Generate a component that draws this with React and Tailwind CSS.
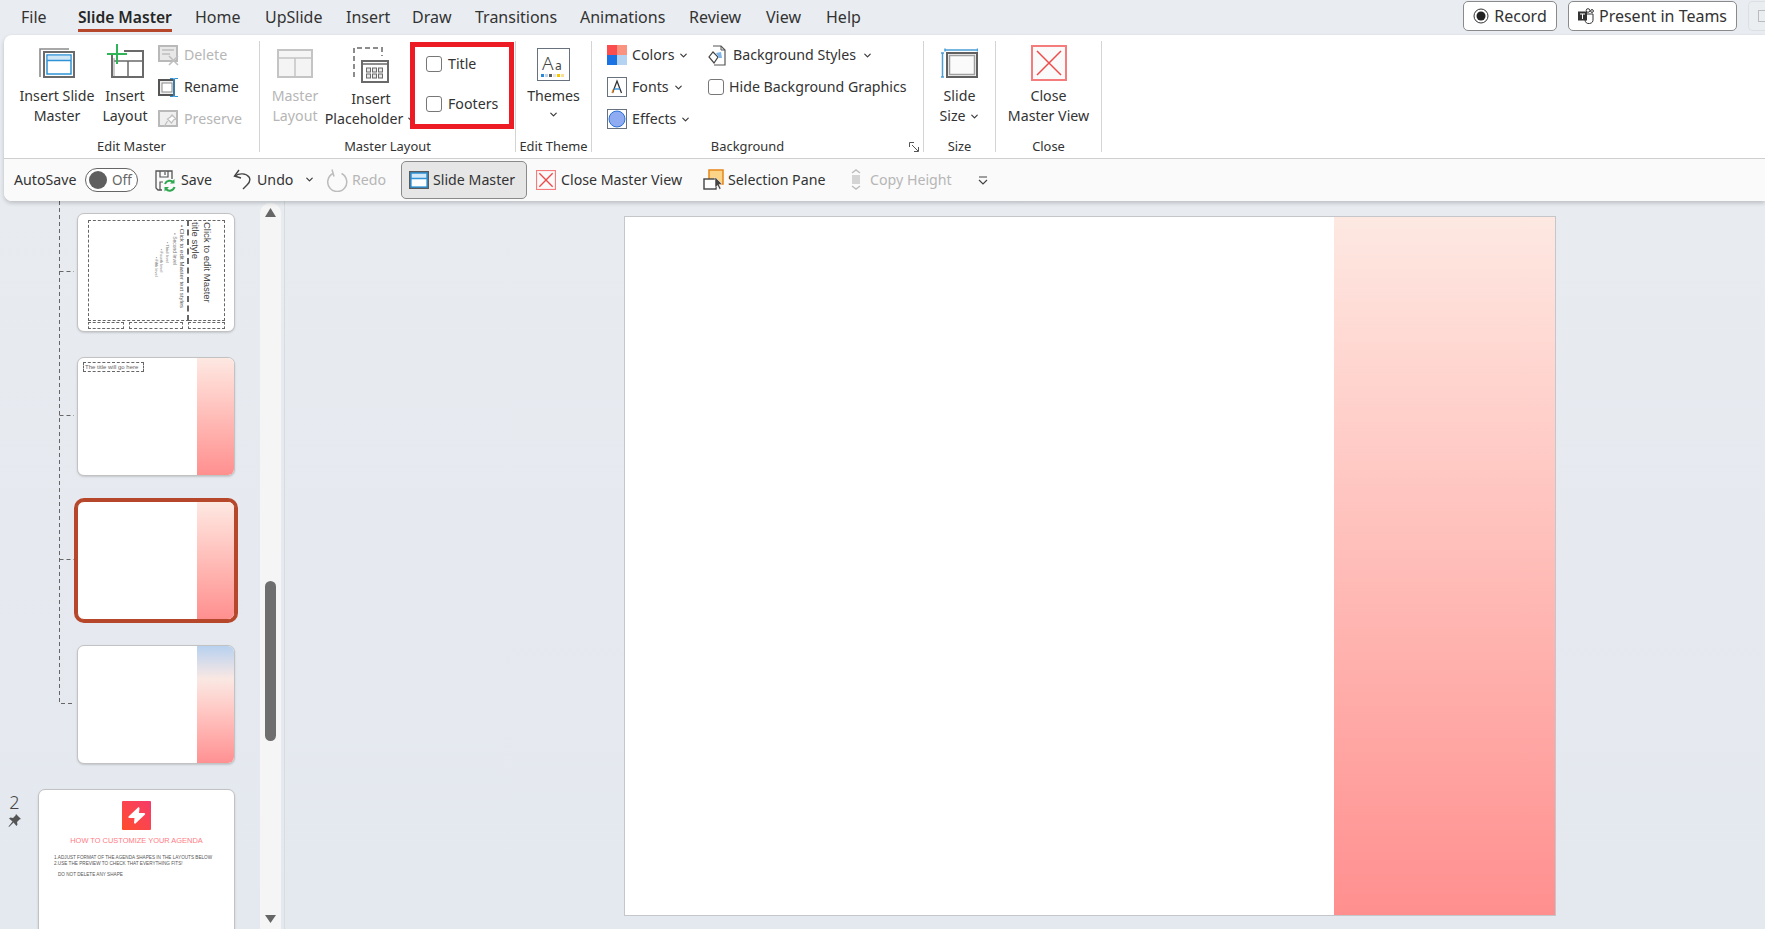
import React from 'react';
import { ChevronDown } from 'lucide-react';

const tabs = [
  { name: 'File', w: 'w-[57px]' },
  { name: 'Slide Master', w: 'w-[117px]', active: true },
  { name: 'Home', w: 'w-[70px]' },
  { name: 'UpSlide', w: 'w-[81px]' },
  { name: 'Insert', w: 'w-[66px]' },
  { name: 'Draw', w: 'w-[63px]' },
  { name: 'Transitions', w: 'w-[105px]' },
  { name: 'Animations', w: 'w-[109px]' },
  { name: 'Review', w: 'w-[77px]' },
  { name: 'View', w: 'w-[60px]' },
  { name: 'Help', w: 'w-[60px]' },
];

const Chev = ({ className = '' }) => <ChevronDown size={11} strokeWidth={2.6} className={`shrink-0 text-[#3a3a3a] ${className}`} />;

const InsertMasterIcon = () => (
  <svg width="36" height="30" viewBox="0 0 36 30" fill="none">
    <path d="M1 29V1h29" stroke="#8c8c8c" strokeWidth="1.6" />
    <rect x="5" y="4" width="30" height="25" fill="#fff" stroke="#6a6a6a" strokeWidth="2" />
    <rect x="8" y="7" width="24" height="19" fill="#fff" stroke="#2f93d6" strokeWidth="1.5" />
    <rect x="8.8" y="7.8" width="22.4" height="4.2" fill="#cfe6f6" />
    <path d="M8 12.5h24" stroke="#2f93d6" strokeWidth="1.5" />
  </svg>
);

const InsertLayoutIcon = () => (
  <svg width="37" height="34" viewBox="0 0 37 34" fill="none" className="-mt-[4px]">
    <path d="M5 11v22h31V7H17" stroke="#6a6a6a" strokeWidth="2" />
    <path d="M7 17h28M21 17v15" stroke="#6a6a6a" strokeWidth="1.5" />
    <path d="M7 32V14" stroke="#9a9a9a" strokeWidth="1" />
    <path d="M0 10h20M10 0v20" stroke="#2fb457" strokeWidth="2" />
  </svg>
);

const DeleteIcon = () => (
  <svg width="21" height="21" viewBox="0 0 21 21" fill="none">
    <rect x="1" y="1" width="18" height="15" fill="#e8e8e8" stroke="#b9b9b9" strokeWidth="2" />
    <path d="M4 5h12M4 9h8" stroke="#bdbdbd" strokeWidth="1.6" />
    <path d="M11 11l9 9M20 11l-9 9" stroke="#bfbfbf" strokeWidth="1.6" />
  </svg>
);

const RenameIcon = () => (
  <svg width="21" height="21" viewBox="0 0 21 21" fill="none">
    <rect x="1" y="3" width="15" height="15" fill="#eee" stroke="#555" strokeWidth="2" />
    <rect x="4" y="6" width="10" height="9" fill="#fff" stroke="#8a8a8a" strokeWidth="1" />
    <path d="M12 1.5h2.5c1 0 1.5.5 1.5 1.500v15c0 1-.5 1.500-1.500 1.500H12M20 1.500h-2.500c-1 0-1.500.5-1.500 1.500v15c0 1 .5 1.500 1.500 1.500H20" stroke="#2f93d6" strokeWidth="1.2" />
  </svg>
);

const PreserveIcon = () => (
  <svg width="21" height="21" viewBox="0 0 21 21" fill="none">
    <rect x="1" y="2" width="18" height="15" fill="#efefef" stroke="#b9b9b9" strokeWidth="2" />
    <path d="M14 6l4 4-2.500 1-2 3-4-4 3-2zM9.500 12L6 18" stroke="#c0c0c0" strokeWidth="1.3" fill="#fff" />
  </svg>
);

const MasterLayoutIcon = () => (
  <svg width="36" height="29" viewBox="0 0 36 29" fill="none">
    <rect x="1" y="1" width="34" height="27" fill="#f4f4f4" stroke="#c4c4c4" strokeWidth="2" />
    <path d="M2 9h32M18 9v18" stroke="#c4c4c4" strokeWidth="1.5" />
  </svg>
);

const PlaceholderIcon = () => (
  <svg width="36" height="36" viewBox="0 0 36 36" fill="none">
    <path d="M1 30V1h28v8" stroke="#8c8c8c" strokeWidth="2" strokeDasharray="5 3" />
    <rect x="9" y="14" width="26" height="21" fill="#fff" stroke="#6a6a6a" strokeWidth="2" />
    <path d="M10 17h24" stroke="#6a6a6a" strokeWidth="1.5" />
    {[13.5, 19.5, 25.5].map(x => [21, 27].map(y => (
      <rect key={`${x}-${y}`} x={x} y={y} width="4" height="4" fill="#e8e8e8" stroke="#6a6a6a" strokeWidth="1" />
    )))}
  </svg>
);

const ThemesIcon = () => (
  <svg width="33" height="33" viewBox="0 0 33 33" fill="none">
    <rect x="0.5" y="0.5" width="32" height="32" fill="#fff" stroke="#68727f" strokeWidth="1" />
    <text x="5" y="22" fontSize="19" fontFamily="'Noto Sans', sans-serif" fontWeight="300" fill="#444">A</text>
    <text x="18" y="22" fontSize="12" fontFamily="'Noto Sans', sans-serif" fill="#444">a</text>
    <rect x="4" y="26" width="3" height="3" fill="#2b88d8" />
    <rect x="8" y="26" width="3" height="3" fill="#b8d4ee" />
    <rect x="12" y="26" width="3" height="3" fill="#5a5a5a" />
    <rect x="16" y="26" width="3" height="3" fill="#e4e4e4" />
    <rect x="20" y="26" width="3" height="3" fill="#f6c700" />
    <rect x="24" y="26" width="3" height="3" fill="#fbdf8f" />
  </svg>
);

const ColorsIcon = () => (
  <svg width="20" height="20" viewBox="0 0 20 20">
    <rect width="10" height="10" fill="#fb4d4d" />
    <rect x="10" width="10" height="10" fill="#f99380" />
    <rect y="10" width="10" height="10" fill="#1a73e0" />
    <rect x="10" y="10" width="10" height="10" fill="#b4d3f2" />
  </svg>
);

const FontsIcon = () => (
  <svg width="20" height="20" viewBox="0 0 20 20" fill="none">
    <rect x="0.5" y="0.5" width="19" height="19" fill="#fff" stroke="#68727f" />
    <path d="M5.5 16L10 4l4.500 12" stroke="#333" strokeWidth="1.3" />
    <path d="M7 12h6" stroke="#2b88d8" strokeWidth="1.3" />
    <path d="M5 16l1.300-3.500" stroke="#e98a15" strokeWidth="1.3" />
  </svg>
);

const EffectsIcon = () => (
  <svg width="20" height="20" viewBox="0 0 20 20" fill="none">
    <rect x="0.5" y="0.5" width="19" height="19" fill="#fff" stroke="#68727f" />
    <circle cx="10" cy="10" r="8" fill="#8fabf2" stroke="#2b72d8" strokeWidth="1" />
  </svg>
);

const BgStylesIcon = () => (
  <svg width="18" height="21" viewBox="0 0 18 21" fill="none">
    <path d="M5 1h8l4 4v15H6" stroke="#555" strokeWidth="1.2" />
    <path d="M13 1v4h4" stroke="#555" strokeWidth="1" />
    <path d="M5 7l5 5-4 6-5-6z" fill="#fff" stroke="#444" strokeWidth="1.2" />
    <path d="M8 8l5-1 1 6-3 0z" fill="#7fb4e8" />
  </svg>
);

const SlideSizeIcon = () => (
  <svg width="37" height="30" viewBox="0 0 37 30" fill="none">
    <path d="M4 2h33M4 .5v3M36.500 .5v3" stroke="#4a9fd8" strokeWidth="1.5" />
    <path d="M1.5 5v24M0 5h3M0 29h3" stroke="#4a9fd8" strokeWidth="1.5" />
    <rect x="6" y="5" width="30" height="24" fill="#f7f7f7" stroke="#606060" strokeWidth="2" />
    <rect x="8.5" y="7.5" width="25" height="19" fill="#fafafa" stroke="#a0a0a0" strokeWidth="1.5" />
  </svg>
);

const CloseIcon = ({ size }) => (
  <svg width={size} height={size} viewBox="0 0 36 36" fill="none">
    <rect x="1" y="1" width="34" height="34" fill="#fafafa" stroke="#f47c7c" strokeWidth="2" />
    <path d="M6 6l24 24M30 6L6 30" stroke="#ee4a4a" strokeWidth={size > 30 ? 1.5 : 2.4} />
  </svg>
);

const SaveIcon = () => (
  <svg width="21" height="23" viewBox="0 0 21 23" fill="none">
    <path d="M7 21H3l-2-2V2h16v8" stroke="#555" strokeWidth="1.3" />
    <path d="M5 2v6h8V2M10 3v3" stroke="#555" strokeWidth="1.2" />
    <path d="M5 21v-8h3" stroke="#555" strokeWidth="1.2" />
    <path d="M10 15a5 5 0 0 1 8.500-1.500M19.500 18a5 5 0 0 1-8.500 2" stroke="#2fa84f" strokeWidth="2" />
    <path d="M19.500 10v4.500H15M9.500 22.500V18H14" fill="#2fa84f" />
  </svg>
);

const UndoIcon = () => (
  <svg width="19" height="21" viewBox="0 0 19 21" fill="none">
    <path d="M6 1L1.500 7l6.500 2" stroke="#444" strokeWidth="1.4" />
    <path d="M2 7c4-3 11-3 14 1 2 3 0 6-2 8l-4 4" stroke="#444" strokeWidth="1.4" />
  </svg>
);

const RedoIcon = () => (
  <svg width="21" height="23" viewBox="0 0 21 23" fill="none">
    <path d="M6 4.500a9.500 9.500 0 1 0 8.500 0" stroke="#bcbcbc" strokeWidth="1.5" />
    <path d="M5 .5l2 7" stroke="#bcbcbc" strokeWidth="1.5" />
  </svg>
);

const SlideMasterSmallIcon = () => (
  <svg width="22" height="20" viewBox="0 0 22 20" fill="none">
    <rect x="1" y="1" width="20" height="18" fill="#5a5a5a" />
    <rect x="3" y="3" width="16" height="14" fill="#d4e9f8" stroke="#2f93d6" strokeWidth="1.5" />
    <rect x="3.8" y="8.5" width="14.4" height="7.7" fill="#fff" />
    <path d="M3 8.5h16" stroke="#2f93d6" strokeWidth="1.5" />
  </svg>
);

const SelectionPaneIcon = () => (
  <svg width="21" height="22" viewBox="0 0 21 22" fill="none">
    <rect x="6" y="1" width="14" height="14" fill="#fbd488" stroke="#e6861a" strokeWidth="1.5" />
    <rect x="1" y="10" width="12" height="10" fill="#fff" stroke="#444" strokeWidth="1.4" />
    <path d="M12 8l7 7-3 .5 2 4-1.500 1-2-4-2.500 2z" fill="#444" stroke="#fff" strokeWidth=".5" />
  </svg>
);

const CopyHeightIcon = () => (
  <svg width="14" height="21" viewBox="0 0 14 21" fill="none">
    <path d="M3 4l4-3 4 3M3 17l4 3 4-3" stroke="#bdbdbd" strokeWidth="1.5" />
    <rect x="3" y="6" width="8" height="9" fill="#d4d4d4" />
  </svg>
);

const Pin = () => (
  <svg width="13" height="13" viewBox="0 0 13 13" fill="#555">
    <path d="M8 0l5 5-1.500.5L9 8l.5 2.500L8.500 12 5.500 8.500 1 13 .5 12.500 4.500 7.500 1 4.500l1.500-1L5 4l2.500-2.500z" />
  </svg>
);

const LargeBtn = ({ icon, lines, w, top = 'h-[45px]', off, chev }) => (
  <div className={`${w} shrink-0 flex flex-col items-center text-center leading-[20px] ${off ? 'text-[#b6b6b6]' : 'text-[#333]'}`}>
    <div className={`${top} flex items-center justify-center pb-[1px]`}>{icon}</div>
    {lines.map((l, i) => (
      <div key={l} className="whitespace-nowrap flex items-center gap-[3px]">
        {l}
        {chev && i === lines.length - 1 && <Chev />}
      </div>
    ))}
  </div>
);

const SmallItem = ({ icon, label, off, chev, gap = 'gap-[5px]' }) => (
  <div className={`h-[28px] flex items-center ${gap} whitespace-nowrap ${off ? 'text-[#b6b6b6]' : 'text-[#333]'}`}>
    {icon}
    <span>{label}</span>
    {chev && <Chev className="ml-[-1px]" />}
  </div>
);

const Group = ({ w, label, children, labelClass = '', launcher }) => (
  <div className={`${w} shrink-0 h-[111px] mt-[6px] flex flex-col relative border-r border-[#d4d4d4]`}>
    <div className="flex-1 flex min-h-0">{children}</div>
    <div className={`h-[20px] mb-[-5px] flex items-center justify-center text-[12.9px] text-[#333] ${labelClass}`}>{label}</div>
    {launcher && (
      <svg width="10" height="10" viewBox="0 0 10 10" fill="none" className="absolute right-[4px] bottom-[0px]">
        <path d="M.5 5V.5H5M3 3l6 6M9.500 5v4.500H5" stroke="#555" strokeWidth="1" />
      </svg>
    )}
  </div>
);

const CheckBox = () => <div className="w-[16px] h-[16px] shrink-0 rounded-[3px] border border-[#777] bg-white" />;

const Thumb = ({ selected, className = 'ml-[77px] w-[158px] h-[119px]', children }) => (
  <div className={`${className} shrink-0 bg-white rounded-[7px] overflow-hidden flex border font-['Liberation_Sans',sans-serif] ${selected ? 'border-[#b7472a] ring-[3px] ring-[#b7472a]' : 'border-[#c2c2c2] shadow-[0_1px_2px_rgba(0,0,0,0.15)]'}`}>
    {children}
  </div>
);

const RedBand = () => <div className="w-[37px] shrink-0 h-full bg-linear-to-b from-[#fde8e2] to-[#ff8f8f]" />;

const App = () => (
  <div className="w-[1765px] h-[929px] overflow-hidden flex flex-col bg-linear-to-b from-[#e9edf1] to-[#e4e8ef] text-[14.2px] text-[#333] font-['Noto_Sans',sans-serif]">
    {/* Tabs */}
    <div className="h-[35px] shrink-0 flex items-start pt-[7px] pl-[21px] text-[#333] leading-[20px] text-[16px]">
      {tabs.map(t => (
        <div key={t.name} className={`${t.w} shrink-0`}>
          {t.active
            ? <span className="inline-block text-[15.6px] font-semibold text-[#262626] pb-[2px] border-b-[3px] border-[#b7472a]">{t.name}</span>
            : t.name}
        </div>
      ))}
      <div className="ml-auto flex gap-[11px] items-start -mt-[6px]">
        <div className="w-[94px] h-[30px] bg-white border border-[#8a8a8a] rounded-[5px] flex items-center justify-center gap-[5px]">
          <svg width="16" height="16" viewBox="0 0 16 16" fill="none">
            <circle cx="8" cy="8" r="7" stroke="#333" strokeWidth="1" />
            <circle cx="8" cy="8" r="4.5" fill="#222" />
          </svg>
          Record
        </div>
        <div className="w-[169px] h-[30px] bg-white border border-[#8a8a8a] rounded-[5px] flex items-center justify-center gap-[5px]">
          <svg width="16" height="16" viewBox="0 0 16 16">
            <circle cx="10" cy="2.5" r="1.8" fill="none" stroke="#333" strokeWidth="1" />
            <circle cx="14" cy="3" r="1.4" fill="none" stroke="#333" strokeWidth="1" />
            <path d="M6 6h9v5a4 4 0 0 1-8 1z" fill="none" stroke="#333" strokeWidth="1" />
            <rect x="0" y="3.5" width="9" height="9" fill="#333" />
            <path d="M2 5.5h5v1H5v4.500H4V6.500H2z" fill="#fff" />
          </svg>
          Present in Teams
        </div>
        <div className="w-[17px] h-[30px] bg-[#ebeef1] border border-r-0 border-[#dcdfe3] rounded-l-[5px] pl-[9px] pt-[8px]">
          <div className="w-[8px] h-[12px] border border-r-0 border-[#bbb]" />
        </div>
      </div>
    </div>

    {/* Ribbon + quick access */}
    <div className="ml-[4px] shrink-0 relative z-10 bg-white rounded-tl-[8px] rounded-bl-[8px] shadow-[0_2px_4px_rgba(0,0,0,0.2)]">
      <div className="h-[123px] flex items-start">
        <Group w="w-[256px]" label="Edit Master">
          <div className="pl-[11px] flex">
            <LargeBtn w="w-[84px]" icon={<InsertMasterIcon />} lines={['Insert Slide', 'Master']} />
            <LargeBtn w="w-[52px]" icon={<InsertLayoutIcon />} lines={['Insert', 'Layout']} />
          </div>
          <div className="ml-[7px] flex flex-col gap-[4px]">
            <SmallItem off icon={<DeleteIcon />} label="Delete" />
            <SmallItem icon={<RenameIcon />} label="Rename" />
            <SmallItem off icon={<PreserveIcon />} label="Preserve" />
          </div>
        </Group>

        <Group w="w-[256px]" label="Master Layout">
          <div className="pl-[10px]">
            <LargeBtn off w="w-[50px]" icon={<MasterLayoutIcon />} lines={['Master', 'Layout']} />
          </div>
          <div className="ml-[5px] mr-[-7px]">
            <LargeBtn w="w-[92px]" top="h-[48px]" chev icon={<PlaceholderIcon />} lines={['Insert', 'Placeholder']} />
          </div>
          <div className="mt-[1px] w-[104px] h-[87px] relative z-10 bg-white border-[5px] border-[#ed1c24] pl-[11px] flex flex-col gap-[6px]">
            <div className="h-[34px] flex items-center gap-[6px]"><CheckBox />Title</div>
            <div className="h-[34px] flex items-center gap-[6px]"><CheckBox />Footers</div>
          </div>
        </Group>

        <Group w="w-[76px]" label="Edit Theme">
          <div className="w-full flex flex-col items-center">
            <div className="h-[45px] flex items-center pt-[1px]"><ThemesIcon /></div>
            <div className="leading-[20px]">Themes</div>
            <Chev className="mt-[3px]" />
          </div>
        </Group>

        <Group w="w-[332px]" label="Background" labelClass="pr-[20px]" launcher>
          <div className="pl-[15px] w-[116px] flex flex-col gap-[4px]">
            <SmallItem icon={<ColorsIcon />} label="Colors" chev />
            <SmallItem icon={<FontsIcon />} label="Fonts" chev />
            <SmallItem icon={<EffectsIcon />} label="Effects" chev />
          </div>
          <div className="flex flex-col gap-[4px]">
            <SmallItem icon={<BgStylesIcon />} label="Background Styles" chev gap="gap-[7px]" />
            <SmallItem icon={<CheckBox />} label="Hide Background Graphics" />
          </div>
        </Group>

        <Group w="w-[72px]" label="Size">
          <LargeBtn w="w-full" chev icon={<SlideSizeIcon />} lines={['Slide', 'Size']} />
        </Group>

        <Group w="w-[106px]" label="Close">
          <LargeBtn w="w-full" icon={<CloseIcon size={36} />} lines={['Close', 'Master View']} />
        </Group>
      </div>

      <div className="h-[43px] border-t border-[#cfcfcf] bg-[#fafafa] rounded-bl-[8px] flex items-center pl-[10px] whitespace-nowrap">
        <div className="w-[71px] shrink-0">AutoSave</div>
        <div className="w-[53px] h-[24px] shrink-0 mr-[17px] rounded-full border border-[#666] bg-white flex items-center pl-[3px] gap-[5px] text-[13.5px] text-[#666]">
          <div className="w-[18px] h-[18px] rounded-full bg-[#5f5f5f]" />
          Off
        </div>
        <div className="w-[78px] shrink-0 flex items-center gap-[5px]"><SaveIcon />Save</div>
        <div className="w-[94px] shrink-0 flex items-center gap-[5px]"><UndoIcon />Undo<Chev className="ml-[6px]" /></div>
        <div className="w-[74px] shrink-0 flex items-center gap-[4px] text-[#b6b6b6]"><RedoIcon />Redo</div>
        <div className="w-[126px] h-[38px] shrink-0 mr-[9px] rounded-[5px] border border-[#8a8a8a] bg-[#e6e6e6] flex items-center pl-[6px] gap-[3px]"><SlideMasterSmallIcon />Slide Master</div>
        <div className="w-[167px] shrink-0 flex items-center gap-[5px]"><CloseIcon size={20} />Close Master View</div>
        <div className="w-[146px] shrink-0 flex items-center gap-[4px]"><SelectionPaneIcon />Selection Pane</div>
        <div className="w-[129px] shrink-0 flex items-center gap-[7px] text-[#b6b6b6]"><CopyHeightIcon />Copy Height</div>
        <svg width="10" height="9" viewBox="0 0 10 9" fill="none">
          <path d="M1 1h8M1 4l4 4 4-4" stroke="#444" strokeWidth="1.2" />
        </svg>
      </div>
    </div>

    {/* Main */}
    <div className="flex-1 min-h-0 flex">
      <div className="w-[285px] shrink-0 flex pr-[3px] border-r border-[#d8dce0] relative">
        {/* tree connector */}
        <svg width="80" height="505" viewBox="0 0 80 505" fill="none" className="absolute left-0 top-0">
          <path d="M59.5 0V502.5H74M59.5 70.5H74M59.5 214.5H74M59.5 358.5H74" stroke="#666" strokeWidth="1" strokeDasharray="4 3" />
        </svg>
        <div className="w-[260px] shrink-0 flex flex-col gap-[25px] pt-[12px] overflow-hidden">
          <Thumb>
            <div className="flex-1 flex flex-col pl-[10px] pr-[9px] pt-[6px] gap-[1px]">
              <div className="h-[101px] flex">
                <div className="w-[101px] border border-dashed border-[#666] border-r-2 flex flex-row-reverse overflow-hidden pt-[1px]">
                  <div className="[writing-mode:vertical-rl] text-[6px] leading-[7px] pr-[2px] pt-[3px] text-[#555] whitespace-nowrap">• Click to edit Master text styles</div>
                  <div className="[writing-mode:vertical-rl] text-[5px] leading-[7px] pt-[11px] text-[#777] whitespace-nowrap">• Second level</div>
                  <div className="[writing-mode:vertical-rl] text-[4px] leading-[7px] pt-[20px] text-[#777] whitespace-nowrap">• Third level</div>
                  <div className="[writing-mode:vertical-rl] text-[4px] leading-[5px] pt-[27px] text-[#777] whitespace-nowrap">• Fourth level</div>
                  <div className="[writing-mode:vertical-rl] text-[4px] leading-[5px] pt-[35px] text-[#777] whitespace-nowrap">• Fifth level</div>
                </div>
                <div className="flex-1 border border-l-0 border-dashed border-[#666] overflow-hidden pt-[1px]">
                  <div className="[writing-mode:vertical-rl] text-[9.5px] leading-[12px] text-[#444]">Click to edit Master title style</div>
                </div>
              </div>
              <div className="h-[7px] flex gap-[5px]">
                <div className="w-[36px] border border-dashed border-[#666]" />
                <div className="w-[54px] border border-dashed border-[#666]" />
                <div className="flex-1 border border-dashed border-[#666]" />
              </div>
            </div>
          </Thumb>

          <Thumb>
            <div className="flex-1 pt-[4px] pl-[5px]">
              <div className="w-[61px] h-[10px] border border-dashed border-[#666] text-[6px] leading-[8px] pl-[1px] text-[#666] whitespace-nowrap">The title will go here</div>
            </div>
            <RedBand />
          </Thumb>

          <Thumb selected>
            <div className="flex-1" />
            <RedBand />
          </Thumb>

          <Thumb>
            <div className="flex-1" />
            <div className="w-[37px] shrink-0 h-full bg-linear-to-b from-[#b7d1ef] via-[#fae8e3] via-[28%] to-[#ff9092]" />
          </Thumb>

          <div className="flex items-start shrink-0 relative">
            <div className="w-[38px] shrink-0 flex flex-col items-center pl-[1px] pt-[1px] pr-[10px] text-[#444]">
              <div className="text-[18px] leading-[24px] font-light">2</div>
              <Pin />
            </div>
            <Thumb className="w-[197px] h-[148px]">
              <div className="flex-1 flex flex-col items-center pt-[11px]">
                <div className="w-[29px] h-[29px] rounded-[1px] bg-linear-to-tr from-[#ff4d24] to-[#f63a68] flex items-center justify-center">
                  <svg width="19" height="19" viewBox="0 0 19 19" fill="#fff">
                    <path d="M11 1.5c.5-.5 1.500 0 1.500.7L12 7h5c1 0 1.500 1 1 1.500L8.500 17.500c-.5.5-1.500 0-1.500-.7L7.500 12h-5c-1 0-1.500-1-1-1.500z" />
                  </svg>
                </div>
                <div className="mt-[6px] text-[7.45px] leading-[10px] text-[#ff7b85] whitespace-nowrap">HOW TO CUSTOMIZE YOUR AGENDA</div>
                <div className="self-start pl-[15px] mt-[9px] text-[4.65px] leading-[6px] text-[#555] whitespace-nowrap">
                  <div>1.ADJUST FORMAT OF THE AGENDA SHAPES IN THE LAYOUTS BELOW</div>
                  <div>2.USE THE PREVIEW TO CHECK THAT EVERYTHING FITS!</div>
                  <div className="pl-[4px] mt-[5px]">DO NOT DELETE ANY SHAPE</div>
                </div>
              </div>
            </Thumb>
          </div>
        </div>

        <div className="w-[21px] mt-[2px] shrink-0 bg-[#f5f5f5] rounded-t-[10px] flex flex-col items-center pt-[5px]">
          <svg width="11" height="9" viewBox="0 0 11 9" fill="#666"><path d="M5.5 0L11 9H0z" /></svg>
          <div className="w-[11px] h-[160px] mt-[364px] rounded-full bg-[#6e6e6e]" />
          <svg width="11" height="8" viewBox="0 0 11 8" fill="#666" className="mt-auto mb-[6px]"><path d="M0 0h11L5.5 8z" /></svg>
        </div>
      </div>

      {/* Slide canvas */}
      <div className="flex-1 pl-[339px] pt-[15px]">
        <div className="w-[932px] h-[700px] bg-white border border-[#c4c6ca] flex">
          <div className="flex-1" />
          <div className="w-[221px] h-full bg-linear-to-b from-[#fde8e2] to-[#ff8f8f]" />
        </div>
      </div>
    </div>
  </div>
);

export default App;
